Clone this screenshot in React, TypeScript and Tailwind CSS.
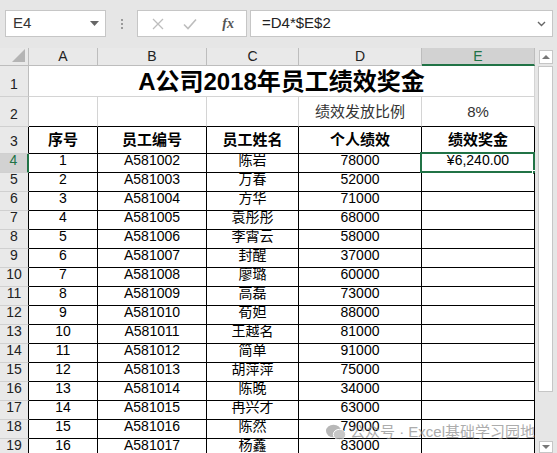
import type { ReactNode } from 'react';

const font = "font-['Liberation_Sans','Noto_Sans_CJK_SC',sans-serif]";

const rows: [string, string, string, string][] = [
  ['1', 'A581002', '陈岩', '78000'],
  ['2', 'A581003', '万春', '52000'],
  ['3', 'A581004', '方华', '71000'],
  ['4', 'A581005', '袁彤彤', '68000'],
  ['5', 'A581006', '李霄云', '58000'],
  ['6', 'A581007', '封醒', '37000'],
  ['7', 'A581008', '廖璐', '60000'],
  ['8', 'A581009', '高磊', '73000'],
  ['9', 'A581010', '荀妲', '88000'],
  ['10', 'A581011', '王越名', '81000'],
  ['11', 'A581012', '简单', '91000'],
  ['12', 'A581013', '胡萍萍', '75000'],
  ['13', 'A581014', '陈晚', '34000'],
  ['14', 'A581015', '冉兴才', '63000'],
  ['15', 'A581016', '陈然', '79000'],
  ['16', 'A581017', '杨鑫', '83000'],
];

const widths = ['w-[69px]', 'w-[109px]', 'w-[92px]', 'w-[123px]', 'w-[113px]'];

function RowHead({ n, h, active, dark }: { n: number; h: string; active?: boolean; dark?: boolean }) {
  return (
    <div
      className={`${h} w-[29px] shrink-0 flex items-end justify-center pb-[1px] text-[14px] border-b border-b-[#d0d0d0] ${
        active
          ? 'bg-[#d2d2d2] text-[#217346] border-r-2 border-r-[#217346]'
          : `bg-[#e9e9e9] text-[#222] border-r ${dark ? 'border-r-black' : 'border-r-[#bdbdbd]'}`
      }`}
    >
      {n}
    </div>
  );
}

function Cell({ w, children, className = '' }: { w: string; children?: ReactNode; className?: string }) {
  return (
    <div className={`${w} shrink-0 relative flex items-end justify-center pb-[1px] border-r border-b border-black text-[14px] text-black ${className}`}>
      {children}
    </div>
  );
}

function Toolbar() {
  return (
    <div className="h-[48px] flex items-start pt-[10px] pl-[5px] bg-[#e6e6e6]">
      <div className="w-[101px] h-[27px] bg-white border border-[#c6c6c6] flex items-center justify-between pl-[7px] pr-[6px]">
        <span className="text-[15px] text-[#333]">E4</span>
        <svg width="9" height="5" viewBox="0 0 9 5">
          <path d="M0 0h9L4.5 5z" fill="#666" />
        </svg>
      </div>
      <div className="w-[31px] h-[27px] flex flex-col items-center justify-center gap-[2px]">
        <span className="w-[2px] h-[2px] bg-[#9a9a9a]" />
        <span className="w-[2px] h-[2px] bg-[#9a9a9a]" />
        <span className="w-[2px] h-[2px] bg-[#9a9a9a]" />
      </div>
      <div className="w-[110px] h-[27px] bg-white border border-[#c6c6c6] flex items-center">
        <svg width="12" height="12" viewBox="0 0 12 12" className="ml-[14px]">
          <path d="M1 1l10 10M11 1L1 11" stroke="#bdbdbd" strokeWidth="1.3" />
        </svg>
        <svg width="14" height="12" viewBox="0 0 14 12" className="ml-[19px]">
          <path d="M1 6.5l4 4L13 1.5" stroke="#bdbdbd" strokeWidth="1.6" fill="none" />
        </svg>
        <span className="ml-auto mr-[12px] font-['Liberation_Serif',serif] italic font-bold text-[14px] text-[#555]">fx</span>
      </div>
      <div className="ml-[3px] w-[303px] h-[27px] bg-white border border-[#c6c6c6] flex items-center justify-between pl-[11px] pr-[6px]">
        <span className="text-[15px] text-[#222]">=D4*$E$2</span>
        <svg width="9" height="6" viewBox="0 0 9 6">
          <path d="M1 1l3.5 3.5L8 1" stroke="#666" strokeWidth="1.4" fill="none" />
        </svg>
      </div>
    </div>
  );
}

function Sheet() {
  const letters = ['A', 'B', 'C', 'D', 'E'];
  return (
    <div className="w-[535px] shrink-0 bg-white">
      <div className="flex h-[18px] bg-[#e9e9e9]">
        <div className="w-[29px] shrink-0 border-r border-b border-[#bdbdbd] relative">
          <svg width="13" height="13" viewBox="0 0 13 13" className="absolute right-[3px] bottom-[3px]">
            <path d="M13 0V13H0z" fill="#b4b4b4" />
          </svg>
        </div>
        {letters.map((l, i) =>
          l === 'E' ? (
            <div key={l} className={`${widths[i]} shrink-0 flex items-center justify-center bg-[#d2d2d2] text-[#217346] text-[14px] border-b-2 border-b-[#217346] border-r border-r-[#bdbdbd]`}>
              {l}
            </div>
          ) : (
            <div key={l} className={`${widths[i]} shrink-0 flex items-center justify-center text-[#222] text-[14px] border-r border-b border-[#bdbdbd]`}>
              {l}
            </div>
          ),
        )}
      </div>

      <div className="flex h-[31px]">
        <RowHead n={1} h="h-[31px]" />
        <div className="w-[506px] shrink-0 flex items-end justify-center border-r border-b border-[#d4d4d4] text-[24px] font-bold text-black leading-none pb-[2px]">
          A公司2018年员工绩效奖金
        </div>
      </div>

      <div className="flex h-[30px]">
        <RowHead n={2} h="h-[30px]" />
        {widths.map((w, i) => (
          <div key={w} className={`${w} shrink-0 flex items-center justify-center border-r border-r-[#d4d4d4] border-b border-b-black text-[15px] text-[#333] pt-[2px]`}>
            {i === 3 ? '绩效发放比例' : i === 4 ? '8%' : ''}
          </div>
        ))}
      </div>

      <div className="flex h-[27px]">
        <RowHead n={3} h="h-[27px]" dark />
        {['序号', '员工编号', '员工姓名', '个人绩效', '绩效奖金'].map((t, i) => (
          <Cell key={t} w={widths[i]} className="font-bold text-[15px] pb-[2px]">
            {t}
          </Cell>
        ))}
      </div>

      {rows.map((r, idx) => (
        <div key={r[1]} className="flex h-[19px]">
          <RowHead n={idx + 4} h="h-[19px]" active={idx === 0} dark />
          {r.map((v, i) => (
            <Cell key={i} w={widths[i]}>
              {v}
            </Cell>
          ))}
          <Cell w={widths[4]}>
            {idx === 0 && (
              <>
                ¥6,240.00
                <div className="absolute -left-[2px] -top-[2px] -right-[1px] -bottom-[1px] border-2 border-[#217346]" />
                <div className="absolute -right-[3px] -bottom-[3px] w-[5px] h-[5px] bg-[#217346] border border-white" />
              </>
            )}
          </Cell>
        </div>
      ))}
    </div>
  );
}

function Scrollbar() {
  return (
    <div className="w-[22px] shrink-0 bg-[#e6e6e6] relative">
      <div className="absolute left-[4px] top-[2px] w-[14px] h-[14px] bg-white border border-[#c6c6c6] flex items-center justify-center">
        <svg width="8" height="4" viewBox="0 0 8 4">
          <path d="M4 0L8 4H0z" fill="#777" />
        </svg>
      </div>
      <div className="absolute left-[3px] top-[18px] w-[15px] h-[326px] bg-white border border-[#c6c6c6]" />
      <div className="absolute left-[4px] bottom-[0px] w-[14px] h-[12px] bg-white border border-[#c6c6c6] flex items-center justify-center">
        <svg width="8" height="4" viewBox="0 0 8 4">
          <path d="M0 0H8L4 4z" fill="#777" />
        </svg>
      </div>
    </div>
  );
}

export default function App() {
  return (
    <div className={`${font} w-[557px] h-[453px] overflow-hidden bg-[#e6e6e6] relative`}>
      <Toolbar />
      <div className="flex h-[405px] overflow-hidden">
        <Sheet />
        <Scrollbar />
      </div>
      <div className="absolute left-[326px] top-[421px] flex items-center gap-[4px] text-[15px] text-[#8a8a8a] opacity-70">
        <svg width="20" height="17" viewBox="0 0 20 17">
          <ellipse cx="7.5" cy="7" rx="7.5" ry="6.3" fill="#9a9a9a" />
          <ellipse cx="13.5" cy="10.5" rx="6.2" ry="5.2" fill="#b0b0b0" stroke="#fff" strokeWidth="1" />
        </svg>
        <span>公众号 · Excel基础学习园地</span>
      </div>
    </div>
  );
}
